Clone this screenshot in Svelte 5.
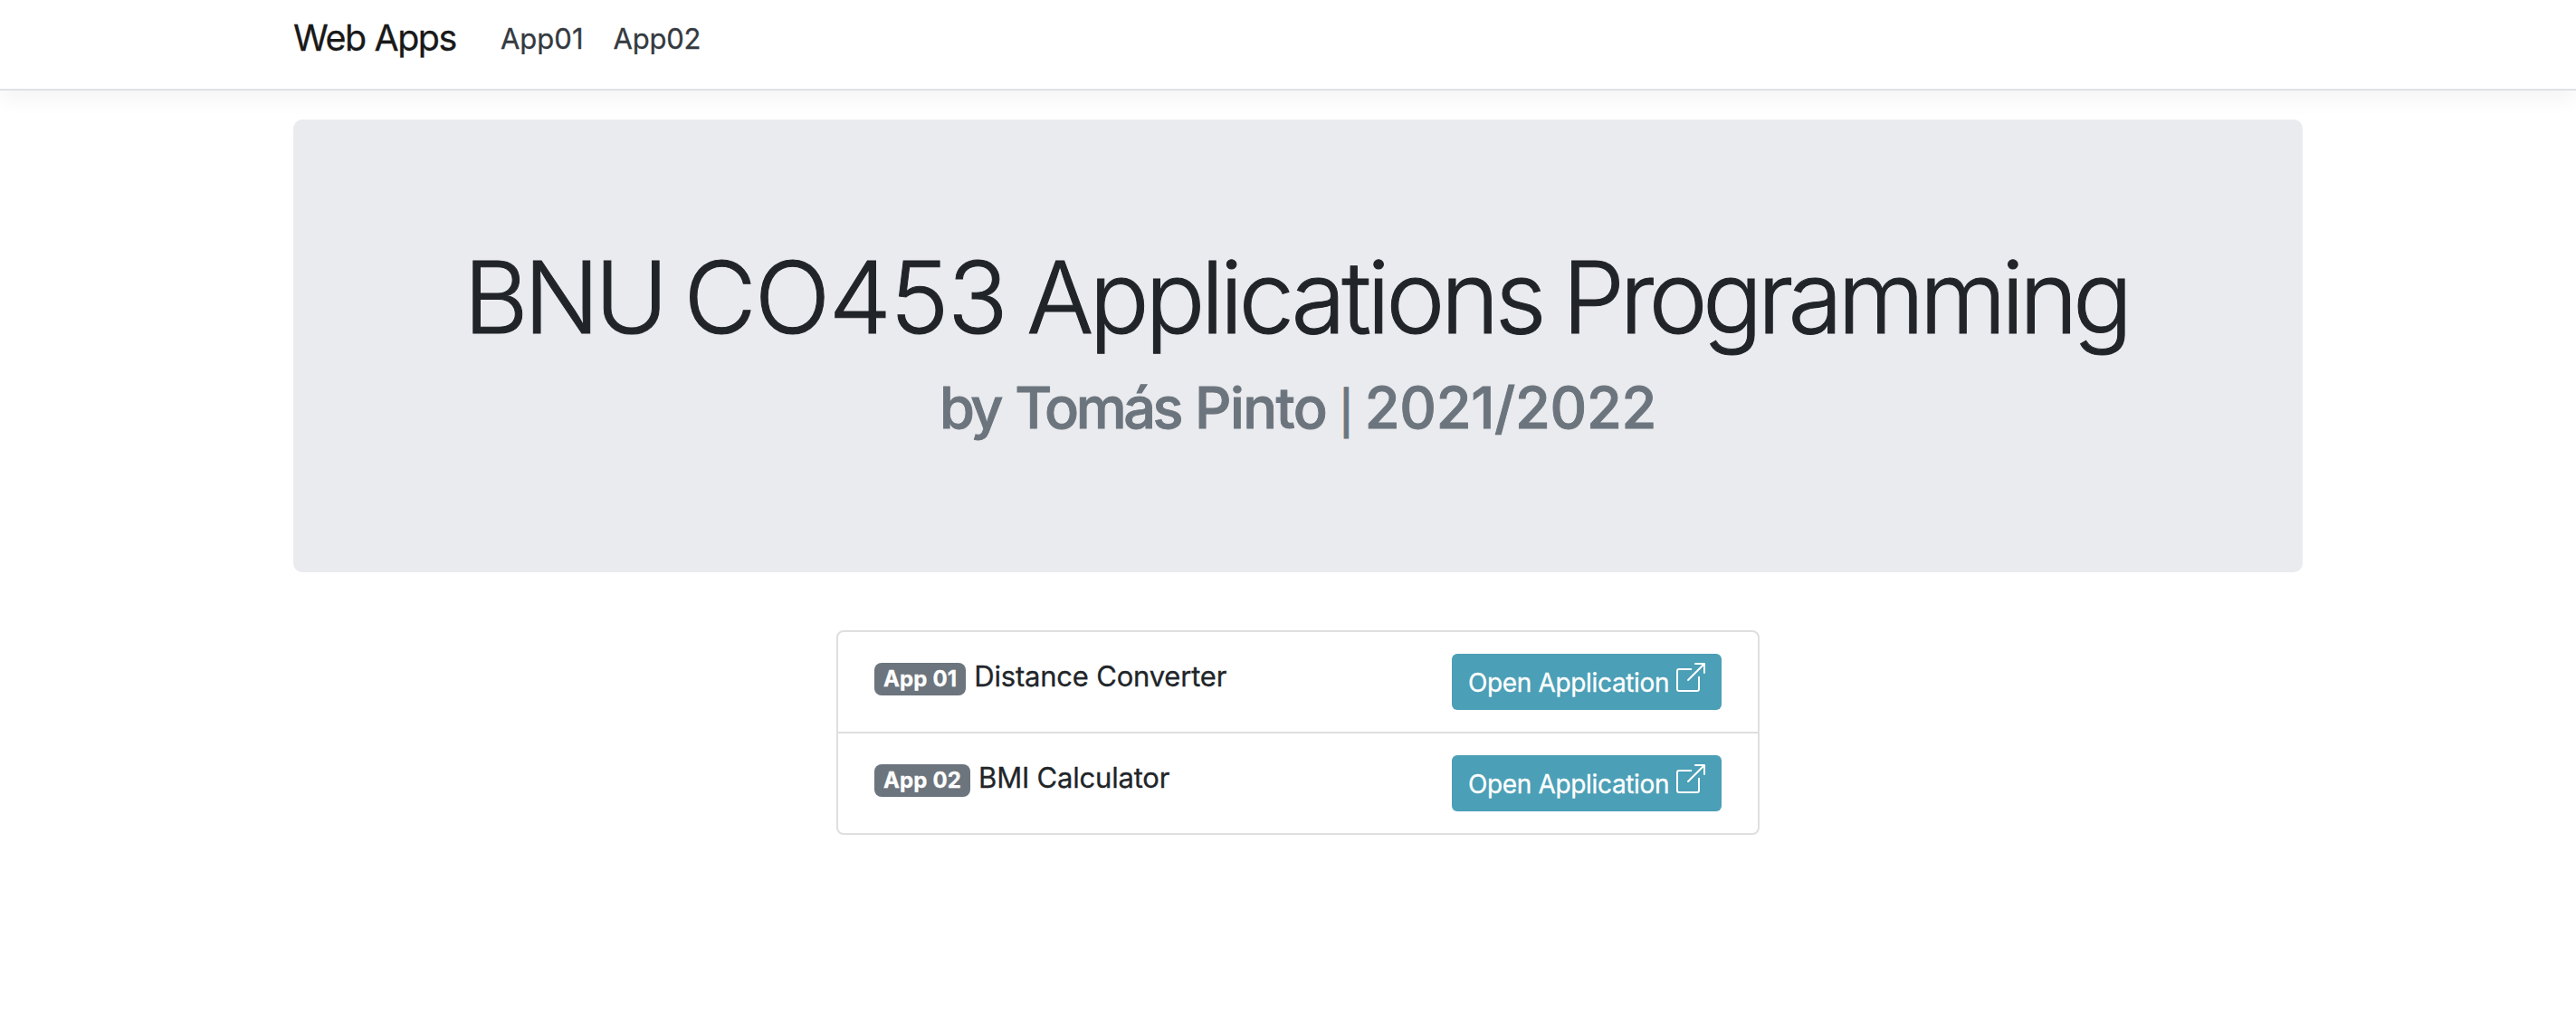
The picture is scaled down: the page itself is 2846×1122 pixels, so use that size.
<script>
  const links = ['App01', 'App02'];
  const apps = [
    { badge: 'App 01', name: 'Distance Converter' },
    { badge: 'App 02', name: 'BMI Calculator' },
  ];
</script>

<header>
  <a class="brand" href="#home">Web Apps</a>
  <nav>
    {#each links as link}<a href="#{link}">{link}</a>{/each}
  </nav>
</header>
<main>
  <section class="hero">
    <h1>
      <span class="bnu">BNU</span>
      <span class="code">CO453</span>
      <span class="apps">Applications</span>
      <span class="prog">Programming</span>
    </h1>
    <h2>
      <span class="tight">by</span>
      <span class="tight">Tomás</span>
      <span class="surname">Pinto</span>
      <span class="bar">|</span>
      <span class="year">2021/2022</span>
    </h2>
  </section>
  <ul>
    {#each apps as app}
      <li>
        <span class="badge">{app.badge}</span>
        <span class="name">{app.name}</span>
        <a class="button" href="#open">
          <span>Open Application</span>
          <svg viewBox="0 0 16 16" fill="currentColor" aria-hidden="true">
            <path d="M8.636 3.5a.5.5 0 0 0-.5-.5H1.5A1.5 1.5 0 0 0 0 4.5v10A1.5 1.5 0 0 0 1.5 16h10a1.5 1.5 0 0 0 1.5-1.5V7.864a.5.5 0 0 0-1 0V14.5a.5.5 0 0 1-.5.5h-10a.5.5 0 0 1-.5-.5v-10a.5.5 0 0 1 .5-.5h6.636a.5.5 0 0 0 .5-.5z" />
            <path d="M16 .5a.5.5 0 0 0-.5-.5h-5a.5.5 0 0 0 0 1h3.793L6.146 9.146a.5.5 0 1 0 .708.708L15 1.707V5.5a.5.5 0 0 0 1 0v-5z" />
          </svg>
        </a>
      </li>
    {/each}
  </ul>
</main>

<style>
  :global(body) {
    margin: 0;
    background: #fff;
    color: #212529;
    font-family: Inter, 'Liberation Sans', sans-serif;
  }
  a { color: inherit; text-decoration: none; }
  header {
    box-sizing: border-box;
    height: 100px;
    padding: 0 324px;
    display: flex;
    border-bottom: 2px solid #dee2e6;
    box-shadow: 0 8px 24px rgba(0, 0, 0, 0.05);
    -webkit-text-stroke: 0.3px currentColor;
  }
  .brand {
    font-size: 39.4px;
    line-height: 84px;
    letter-spacing: -1.4px;
    color: #191919;
    white-space: nowrap;
  }
  nav { display: flex; margin-left: 49px; gap: 33px; }
  nav a { font-size: 31px; line-height: 86px; color: #343a40; }
  nav a + a { letter-spacing: -0.2px; }
  main { width: 2220px; margin: 32px 0 0 324px; }
  .hero {
    box-sizing: border-box;
    height: 500px;
    padding-top: 128px;
    background: #eaebef;
    border-radius: 10px;
  }
  h1, h2 { display: flex; justify-content: center; align-items: baseline; white-space: nowrap; }
  h1 {
    margin: 0;
    padding-right: 5px;
    gap: 22.2px;
    font-size: 110px;
    line-height: 136px;
    font-weight: 300;
    -webkit-text-stroke: 1px currentColor;
  }
  .bnu { letter-spacing: -5px; }
  .code { letter-spacing: -1.6px; }
  .apps { letter-spacing: -4.7px; }
  .prog { letter-spacing: -5.66px; }
  h2 {
    margin: 16px 0 0;
    gap: 16px;
    font-size: 63px;
    line-height: 77px;
    font-weight: 500;
    color: #6c757d;
    -webkit-text-stroke: 0.9px currentColor;
  }
  .tight { letter-spacing: -3.4px; }
  .surname { letter-spacing: -1.6px; }
  .bar { margin: 0 -3.6px 0 -2px; font-size: 47px; line-height: 1; }
  .year { letter-spacing: -0.3px; }
  ul {
    box-sizing: border-box;
    width: 1020px;
    margin: 64px auto 0;
    padding: 0;
    list-style: none;
    border: 2px solid #dfdfdf;
    border-radius: 8px;
    -webkit-text-stroke: 0.3px currentColor;
  }
  li {
    box-sizing: border-box;
    height: 110px;
    padding: 24px 40px;
    display: flex;
    align-items: flex-start;
  }
  li + li { height: 112px; border-top: 2px solid #dfdfdf; }
  .badge {
    margin-top: 10px;
    padding: 0 10px;
    font-size: 24px;
    line-height: 36px;
    font-weight: 700;
    letter-spacing: 0.15px;
    color: #fff;
    background: #6c757d;
    border-radius: 8px;
  }
  .name { margin-left: 9px; font-size: 31px; line-height: 50px; letter-spacing: -0.2px; }
  .button {
    box-sizing: border-box;
    width: 298px;
    height: 62px;
    margin-left: auto;
    padding: 10px 18px;
    display: flex;
    justify-content: space-between;
    font-size: 28px;
    line-height: 44px;
    letter-spacing: -0.35px;
    white-space: nowrap;
    color: #fff;
    background: #4b9fb6;
    border-radius: 6px;
  }
  svg { width: 32px; height: 32px; }
</style>
